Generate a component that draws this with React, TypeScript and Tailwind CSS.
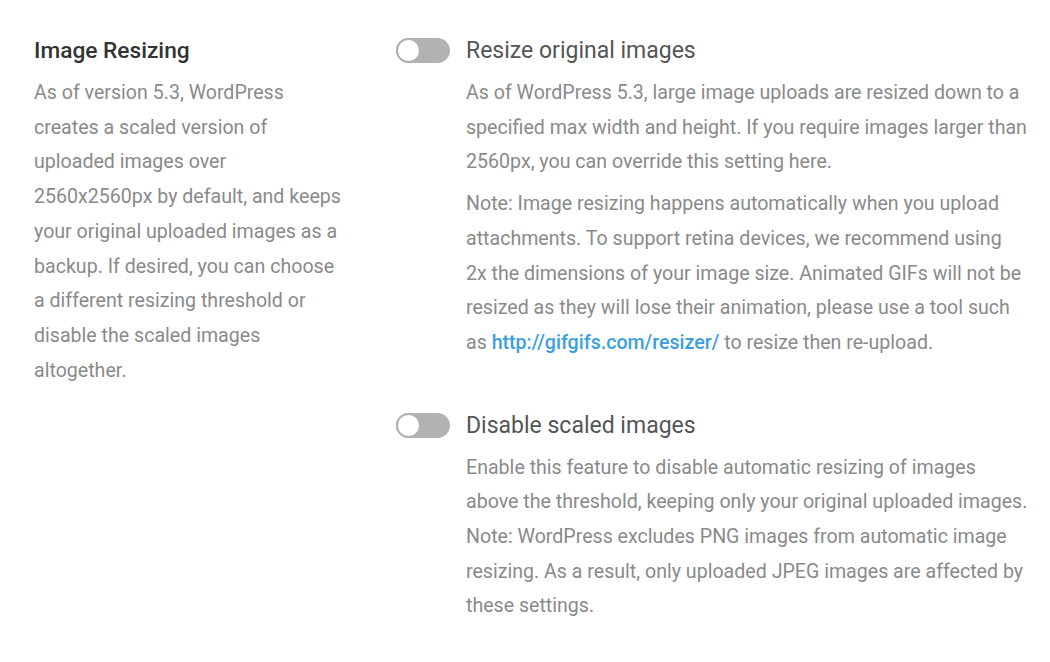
import React from "react";

function Toggle() {
  return (
    <div className="mt-[2px] flex h-[25px] w-[54px] shrink-0 items-center rounded-full bg-[#b2b2b2]">
      <div className="h-[25px] w-[25px] rounded-full border-2 border-[#b2b2b2] bg-white" />
    </div>
  );
}

function Setting({ title, children }: { title: string; children: React.ReactNode }) {
  return (
    <div className="flex gap-4">
      <Toggle />
      <div className="w-[561.5px]">
        <h3 className="text-[23px] leading-[30px] text-[#555555]">{title}</h3>
        <div className="mt-[10px] text-[19.6px] leading-[34.7px] text-[#8a8a8a]">{children}</div>
      </div>
    </div>
  );
}

export default function App() {
  return (
    <div className="flex min-h-[662px] bg-white pt-[36px] pl-[34px] font-['Roboto',sans-serif]">
      <div className="w-[362px] shrink-0">
        <div className="w-[310px]">
          <h2 className="text-[22.7px] leading-[30px] font-medium text-[#333333]">Image Resizing</h2>
          <p className="mt-[10px] text-[19.6px] leading-[34.7px] text-[#8a8a8a]">
            As of version 5.3, WordPress creates a scaled version of uploaded images over 2560x2560px by
            default, and keeps your original uploaded images as a backup. If desired, you can choose a
            different resizing threshold or disable the scaled images altogether.
          </p>
        </div>
      </div>

      <div className="flex flex-col gap-[50px]">
        <Setting title="Resize original images">
          <p>
            As of WordPress 5.3, large image uploads are resized down to a specified max width and height. If
            you require images larger than 2560px, you can override this setting here.
          </p>
          <p className="mt-[7px]">
            Note: Image resizing happens automatically when you upload attachments. To support retina devices,
            we recommend using 2x&nbsp;the dimensions of your image size. Animated GIFs will not be resized as
            they will lose their animation, please use a tool such as{" "}
            <a href="#" className="font-medium text-[#3a9fe0]">
              http://gifgifs.com/resizer/
            </a>{" "}
            to resize then re-upload.
          </p>
        </Setting>

        <Setting title="Disable scaled images">
          <p>
            Enable this feature to disable automatic resizing of images above the threshold, keeping only your
            original uploaded images. Note: WordPress excludes PNG images from automatic image resizing. As a
            result, only uploaded JPEG images are affected by these settings.
          </p>
        </Setting>
      </div>
    </div>
  );
}
